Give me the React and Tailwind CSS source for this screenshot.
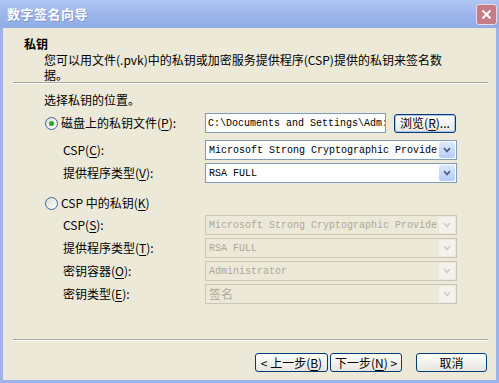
import React from 'react';

const CJK = "font-['Noto_Sans_CJK_SC','Noto_Sans',sans-serif]";
const MONO = "font-['Liberation_Mono',monospace]";

function Key({ children }) {
  return <span className="underline underline-offset-2">{children}</span>;
}

function Radio({ checked }) {
  return (
    <span className="flex h-[13px] w-[13px] shrink-0 items-center justify-center rounded-full border border-[#3c6a9c] bg-gradient-to-br from-[#dcdbd3] to-white">
      {checked && <span className="h-[5px] w-[5px] rounded-full bg-[#2ca52c]" />}
    </span>
  );
}

function Arrow({ disabled }) {
  return (
    <span
      className={`flex w-[16px] items-center justify-center rounded-[2px] ${
        disabled ? 'bg-[#f3f2ec]' : 'bg-gradient-to-b from-[#dde8fd] to-[#b6cdf8]'
      }`}
    >
      <svg width="8" height="6" viewBox="0 0 8 6">
        <path d="M1 1.2 L4 4.4 L7 1.2" fill="none" stroke={disabled ? '#d2d0c6' : '#4d6185'} strokeWidth="1.7" />
      </svg>
    </span>
  );
}

function Combo({ value, disabled, cjk }) {
  return (
    <div
      className={`flex h-[20px] w-[252px] items-stretch border p-px ${
        disabled ? 'border-[#c9c7ba] bg-[#ece9d8] text-[#aca899]' : 'border-[#7f9db9] bg-white text-black'
      }`}
    >
      <span className={`flex flex-1 items-center overflow-hidden whitespace-nowrap pl-[2px] ${cjk ? 'text-[12px]' : `${MONO} text-[10px]`}`}>
        {value}
      </span>
      <Arrow disabled={disabled} />
    </div>
  );
}

function Row({ label, children, className = '' }) {
  return (
    <div className={`flex h-[20px] items-center ${className}`}>
      <span className="w-[161px] pl-[19px]">{label}</span>
      {children}
    </div>
  );
}

function Btn({ children, className = '' }) {
  return (
    <button className={`flex h-[19px] items-center justify-center rounded-[3px] border border-[#003c74] bg-gradient-to-b from-white to-[#e6e5de] text-[12px] leading-none text-black ${className}`}>
      {children}
    </button>
  );
}

export default function App() {
  return (
    <div className={`flex h-[383px] w-[499px] flex-col bg-[#9cb2e9] ${CJK} text-[12px] text-black`}>
      {/* title bar */}
      <div className="flex h-[28px] shrink-0 items-center justify-between bg-gradient-to-b from-[#b0c6f2] via-[#9db6ec] to-[#90abe7] pl-[7px] pr-[2px]">
        <span className="text-[13px] font-bold tracking-[0.5px] text-white [text-shadow:1px_1px_0_#7f97cf]">数字签名向导</span>
        <span className="flex h-[21px] w-[21px] items-center justify-center rounded-[3px] border border-[#eadbe4] bg-[#c67b87]">
          <svg width="11" height="11" viewBox="0 0 11 11">
            <path d="M1.5 1.5 L9.5 9.5 M9.5 1.5 L1.5 9.5" stroke="white" strokeWidth="2" />
          </svg>
        </span>
      </div>

      <div className="mx-[3px] mb-[3px] flex flex-1 flex-col bg-[#ece9d8]">
        {/* header */}
        <div className="h-[54px] shrink-0 pt-[9px]">
          <div className="pl-[21px] font-bold leading-[14px]">私钥</div>
          <div className="mt-px pl-[41px]">
            <div className="leading-[15px]">您可以用文件(.pvk)中的私钥或加密服务提供程序(CSP)提供的私钥来签名数</div>
            <div className="leading-[15px]">据。</div>
          </div>
        </div>
        <div className="ml-[10px] mr-[8px] border-t border-b border-t-[#aca899] border-b-white" />

        {/* content */}
        <div className="flex flex-1 flex-col pl-[41px] pt-[9px]">
          <div className="leading-[14px]">选择私钥的位置。</div>

          <div className="mt-[6px] flex h-[20px] items-center">
            <span className="flex w-[161px] items-center gap-[3px] pl-px">
              <Radio checked />
              <span>
                磁盘上的私钥文件(<Key>P</Key>):
              </span>
            </span>
            <div className={`flex h-[20px] w-[181px] items-center overflow-hidden whitespace-nowrap border border-[#7f9db9] bg-white pl-[2px] ${MONO} text-[10px]`}>
              C:\Documents and Settings\Adm:
            </div>
            <button className="ml-[8px] flex h-[19px] w-[62px] items-center justify-center rounded-[3px] border border-[#003c74] bg-gradient-to-b from-white to-[#e6e5de] leading-none shadow-[inset_0_0_0_1px_#a9c4ee]">
              浏览(<Key>R</Key>)...
            </button>
          </div>

          <Row className="mt-[7px]" label={<>CSP(<Key>C</Key>):</>}>
            <Combo value="Microsoft Strong Cryptographic Provide" />
          </Row>
          <Row className="mt-[3px]" label={<>提供程序类型(<Key>V</Key>):</>}>
            <Combo value="RSA FULL" />
          </Row>

          <div className="mt-[10px] flex h-[20px] items-center gap-[3px] pl-px">
            <Radio />
            <span>
              CSP 中的私钥(<Key>K</Key>)
            </span>
          </div>

          <Row className="mt-[2px]" label={<>CSP(<Key>S</Key>):</>}>
            <Combo disabled value="Microsoft Strong Cryptographic Provide" />
          </Row>
          <Row className="mt-[3px]" label={<>提供程序类型(<Key>T</Key>):</>}>
            <Combo disabled value="RSA FULL" />
          </Row>
          <Row className="mt-[3px]" label={<>密钥容器(<Key>O</Key>):</>}>
            <Combo disabled value="Administrator" />
          </Row>
          <Row className="mt-[3px]" label={<>密钥类型(<Key>E</Key>):</>}>
            <Combo disabled cjk value="签名" />
          </Row>
        </div>

        <div className="ml-[10px] mr-[8px] border-t border-b border-t-[#aca899] border-b-white" />

        {/* footer */}
        <div className="flex h-[39px] shrink-0 justify-end pr-[9px] pt-[12px]">
          <Btn className="w-[73px]">
            &lt; 上一步(<Key>B</Key>)
          </Btn>
          <Btn className="ml-[2px] w-[72px]">
            下一步(<Key>N</Key>) &gt;
          </Btn>
          <Btn className="ml-[14px] w-[71px]">取消</Btn>
        </div>
      </div>
    </div>
  );
}
